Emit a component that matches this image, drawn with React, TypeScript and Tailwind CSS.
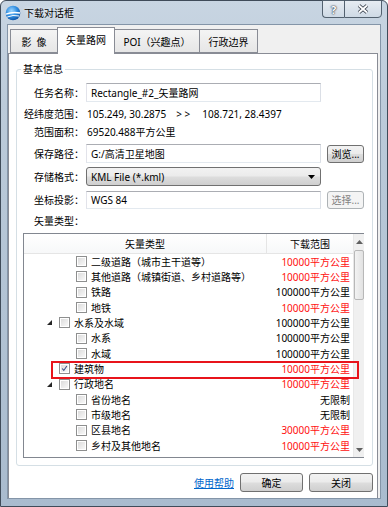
import React from "react";

type Row = {
  label: string;
  range: string;
  red: boolean;
  level: "child" | "parent";
  arrow?: boolean;
  checked?: boolean;
};

const rows: Row[] = [
  { label: "二级道路（城市主干道等）", range: "10000平方公里", red: true, level: "child" },
  { label: "其他道路（城镇街道、乡村道路等）", range: "10000平方公里", red: true, level: "child" },
  { label: "铁路", range: "100000平方公里", red: false, level: "child" },
  { label: "地铁", range: "10000平方公里", red: true, level: "child" },
  { label: "水系及水域", range: "100000平方公里", red: false, level: "parent", arrow: true },
  { label: "水系", range: "100000平方公里", red: false, level: "child" },
  { label: "水域", range: "100000平方公里", red: false, level: "child" },
  { label: "建筑物", range: "10000平方公里", red: true, level: "parent", checked: true },
  { label: "行政地名", range: "10000平方公里", red: true, level: "parent", arrow: true },
  { label: "省份地名", range: "无限制", red: false, level: "child" },
  { label: "市级地名", range: "无限制", red: false, level: "child" },
  { label: "区县地名", range: "30000平方公里", red: true, level: "child" },
  { label: "乡村及其他地名", range: "10000平方公里", red: true, level: "child" },
];

function CheckBox({ checked }: { checked?: boolean }) {
  return (
    <div className="w-[11px] h-[11px] border border-[#8e8f8f] bg-white p-[1px] flex-none">
      <div className="w-full h-full bg-[linear-gradient(135deg,#dcdcdc,#f8f8f8)] flex items-center justify-center">
        {checked && (
          <svg width="9" height="9" viewBox="0 0 9 9">
            <path d="M1.5 4.5 L3.6 7 L7.5 1.2" stroke="#3c4f85" strokeWidth="1.4" fill="none" />
          </svg>
        )}
      </div>
    </div>
  );
}

function Arrow() {
  return (
    <svg width="5" height="5" viewBox="0 0 5 5" className="flex-none">
      <polygon points="5,0 5,5 0,5" fill="#262626" />
    </svg>
  );
}

function TreeRow({ r }: { r: Row }) {
  return (
    <div className="flex h-[15.33px] items-center">
      <div className="w-[243px] flex items-center h-full">
        {r.level === "child" ? (
          <div className="flex items-center pl-[52px]">
            <CheckBox checked={r.checked} />
            <span className="ml-[4px] whitespace-nowrap">{r.label}</span>
          </div>
        ) : (
          <div className="flex items-center pl-[23px]">
            <div className="w-[12px] flex items-center">{r.arrow && <Arrow />}</div>
            <CheckBox checked={r.checked} />
            <span className="ml-[4px] whitespace-nowrap">{r.label}</span>
          </div>
        )}
      </div>
      <div
        className={`w-[86px] text-right pr-[3px] whitespace-nowrap ${r.red ? "text-[#ff1010]" : "text-black"}`}
      >
        {r.range}
      </div>
    </div>
  );
}

function TextBox({ value, w = "w-[235px]" }: { value: string; w?: string }) {
  return (
    <div
      className={`${w} h-full border border-[#abadb3] border-l-[#e2e3ea] border-r-[#dbdfe6] border-b-[#e3e9ef] bg-white flex items-center pl-[4px]`}
    >
      {value}
    </div>
  );
}

function Btn({ children, disabled, w }: { children: React.ReactNode; disabled?: boolean; w: string }) {
  return (
    <div
      className={`${w} h-full rounded-[3px] border flex items-center justify-center ${
        disabled
          ? "border-[#adb2b5] bg-[#f4f4f4] text-[#838383]"
          : "border-[#707070] bg-[linear-gradient(180deg,#f2f2f2_0%,#ebebeb_48%,#dddddd_52%,#cfcfcf_100%)] text-black"
      }`}
    >
      {children}
    </div>
  );
}

function FormRow({
  label,
  children,
  cls,
}: {
  label: string;
  children?: React.ReactNode;
  cls: string;
}) {
  return (
    <div className={`flex items-center ${cls}`}>
      <div className="w-[67px] text-right whitespace-nowrap mr-[2px]">{label}</div>
      {children}
    </div>
  );
}

export default function App() {
  return (
    <div className="w-[388px] h-[507px] overflow-hidden bg-white font-['Noto_Sans','Noto_Sans_CJK_SC',sans-serif] text-[10px] leading-none text-black">
      <div className="w-full h-full flex flex-col rounded-t-[6px] border border-[#3f4b59] bg-[linear-gradient(180deg,#c8d5e2_0%,#bccbda_20%,#b2c3d4_60%,#a9bbce_100%)]">
        {/* Title bar */}
        <div className="h-[23px] flex items-start flex-none">
          <div className="h-full flex items-center pl-[4px]">
            <svg width="16" height="16" viewBox="0 0 16 16">
              <defs>
                <radialGradient id="gl" cx="40%" cy="35%" r="70%">
                  <stop offset="0" stopColor="#9dd6ff" />
                  <stop offset="0.55" stopColor="#2f8de0" />
                  <stop offset="1" stopColor="#0d4fa0" />
                </radialGradient>
              </defs>
              <circle cx="8" cy="8" r="7.3" fill="url(#gl)" />
              <path d="M1 9.2 Q7 6.5 15 8" stroke="#ffffff" strokeWidth="1.4" fill="none" />
              <path d="M2.2 12 Q8 9.5 14 11" stroke="#ffffff" strokeWidth="1" fill="none" />
            </svg>
            <span className="ml-[3px] text-[10px] text-black [text-shadow:0_0_4px_#ffffff]">下载对话框</span>
          </div>
          <div className="ml-auto mr-[5px] flex -mt-[1px]">
            <div className="w-[22px] h-[18px] border border-[#53616f] border-r-0 rounded-bl-[4px] bg-[linear-gradient(180deg,rgba(255,255,255,0.55),rgba(255,255,255,0.15))] flex items-center justify-center">
              <span className="text-white font-bold text-[11px] [text-shadow:0_0_2px_#1b2430,0_0_1px_#1b2430]">?</span>
            </div>
            <div className="w-[38px] h-[18px] border border-[#53616f] rounded-br-[4px] bg-[linear-gradient(180deg,rgba(255,255,255,0.55),rgba(255,255,255,0.15))] flex items-center justify-center">
              <svg width="12" height="10" viewBox="0 0 12 10">
                <path d="M2 1.5 L10 8.5 M10 1.5 L2 8.5" stroke="#2a3340" strokeWidth="3.6" />
                <path d="M2 1.5 L10 8.5 M10 1.5 L2 8.5" stroke="#ffffff" strokeWidth="2" />
              </svg>
            </div>
          </div>
        </div>

        {/* Client */}
        <div className="flex-1 mx-[6px] mb-[7px] border border-[#8495a8] bg-[#f0f0f0] flex flex-col min-h-0">
          {/* Tabs */}
          <div className="h-[28px] flex items-end pl-[2px] flex-none">
            <div className="w-[47px] h-[24px] border border-[#898c95] border-r-0 bg-[linear-gradient(180deg,#f4f4f4,#e6e6e6)] flex items-center justify-center pt-[1px]">
              影&nbsp;&nbsp;像
            </div>
            <div className="w-[58px] h-[27px] -mb-[1px] border border-[#898c95] border-b-0 bg-white flex items-center justify-center pb-[2px] relative z-10">
              矢量路网
            </div>
            <div className="w-[85px] h-[24px] border border-[#898c95] border-l-0 bg-[linear-gradient(180deg,#f4f4f4,#e6e6e6)] flex items-center justify-center pt-[1px]">
              POI（兴趣点）
            </div>
            <div className="w-[58px] h-[24px] border border-[#898c95] border-l-0 bg-[linear-gradient(180deg,#f4f4f4,#e6e6e6)] flex items-center justify-center pt-[1px]">
              行政边界
            </div>
          </div>

          {/* Panel */}
          <div className="flex-1 border border-[#898c95] border-b-0 bg-white mr-[2px] flex flex-col min-h-0">
            {/* Group box */}
            <div className="relative ml-[7px] mr-[4px] mt-[15px] h-[397px] border border-[#d5dfe5] rounded-[3px] flex flex-col">
              <div className="absolute -top-[6px] left-[4px] bg-white px-[2px]">基本信息</div>

              <FormRow label="任务名称：" cls="mt-[13px] h-[19px]">
                <TextBox value="Rectangle_#2_矢量路网" />
              </FormRow>
              <FormRow label="经纬度范围：" cls="mt-[3px] h-[18px]">
                <span className="ml-[1px]">105.249, 30.2875</span>
                <span className="ml-[10px]">&gt; &gt;</span>
                <span className="ml-[12px]">108.721, 28.4397</span>
              </FormRow>
              <FormRow label="范围面积：" cls="h-[18px]">
                <span className="ml-[1px]">69520.488平方公里</span>
              </FormRow>
              <FormRow label="保存路径：" cls="mt-[3px] h-[19px]">
                <TextBox value="G:/高清卫星地图" />
                <div className="ml-[6px] h-[18px]">
                  <Btn w="w-[37px]">浏览...</Btn>
                </div>
              </FormRow>
              <FormRow label="存储格式：" cls="mt-[4px] h-[19px]">
                <div className="w-[235px] h-full rounded-[3px] border border-[#707070] bg-[linear-gradient(180deg,#f2f2f2_0%,#ebebeb_48%,#dddddd_52%,#cfcfcf_100%)] flex items-center pl-[4px] pr-[5px]">
                  <span>KML File (*.kml)</span>
                  <svg width="7" height="4" viewBox="0 0 7 4" className="ml-auto">
                    <polygon points="0,0 7,0 3.5,4" fill="#000" />
                  </svg>
                </div>
              </FormRow>
              <FormRow label="坐标投影：" cls="mt-[5px] h-[18px]">
                <TextBox value="WGS 84" />
                <div className="ml-[6px] h-[18px]">
                  <Btn w="w-[37px]" disabled>
                    选择...
                  </Btn>
                </div>
              </FormRow>
              <FormRow label="矢量类型：" cls="mt-[3px] h-[18px]" />

              {/* Tree list */}
              <div className="relative mt-[3px] ml-[6px] w-[341px] h-[225px] border border-[#828790] bg-white flex">
                <div className="flex-1 flex flex-col">
                  <div className="h-[20px] flex border-b border-[#e5e5e5] bg-[linear-gradient(180deg,#ffffff,#f7f8f9)] flex-none">
                    <div className="w-[243px] flex items-center justify-center border-r border-[#e5e5e5]">矢量类型</div>
                    <div className="w-[86px] flex items-center justify-center">下载范围</div>
                  </div>
                  {rows.map((r, i) => (
                    <TreeRow key={i} r={r} />
                  ))}
                </div>
                {/* Scrollbar */}
                <div className="w-[11px] h-full bg-[#f0f0f0] border-l border-[#e8e8e8] flex flex-col items-center">
                  <div className="h-[16px] w-full flex items-center justify-center">
                    <svg width="7" height="4" viewBox="0 0 7 4">
                      <polygon points="3.5,0 7,4 0,4" fill="#606060" />
                    </svg>
                  </div>
                  <div className="w-[10px] h-[50px] rounded-[2px] border border-[#b8b8b8] bg-[linear-gradient(90deg,#f3f3f3,#e2e2e2)]" />
                  <div className="flex-1" />
                  <div className="h-[14px] w-full flex items-center justify-center">
                    <svg width="7" height="4" viewBox="0 0 7 4">
                      <polygon points="0,0 7,0 3.5,4" fill="#606060" />
                    </svg>
                  </div>
                </div>
                {/* Highlight box */}
                <div className="absolute left-[27px] top-[127px] w-[308px] h-[18px] border-2 border-[#e8141b] pointer-events-none" />
              </div>
            </div>

            {/* Bottom buttons */}
            <div className="mt-[7px] mr-[4px] h-[19px] flex items-center justify-end">
              <span className="text-[#0066cc] underline mr-[6px]">使用帮助</span>
              <Btn w="w-[63px]">确定</Btn>
              <div className="w-[6px]" />
              <Btn w="w-[64px]">关闭</Btn>
            </div>
          </div>
        </div>
      </div>
    </div>
  );
}
